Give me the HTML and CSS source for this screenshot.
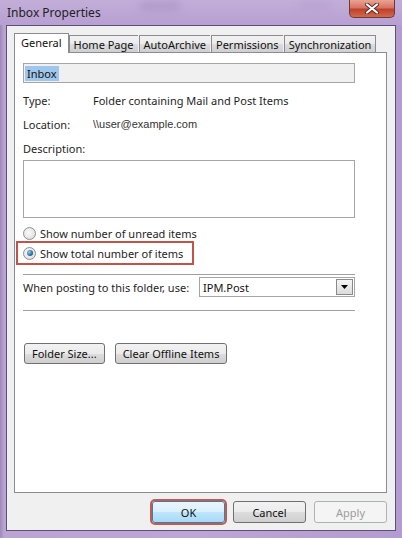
FILE: index.html
```html
<!DOCTYPE html>
<html lang="en">
<head>
<meta charset="UTF-8">
<title>Inbox Properties</title>
<link rel="stylesheet" href="styles.css">
</head>
<body>
<div class="window">
	<div class="titlebar">
		<span class="title">Inbox Properties</span>
		<span class="blur b1"></span>
		<span class="blur b2"></span>
		<div class="close">
			<svg width="16" height="11" viewBox="0 0 16 11">
				<path d="M3 1.5 L13 9.5 M13 1.5 L3 9.5" stroke="#5a2a2a" stroke-width="4" stroke-linecap="round"/>
				<path d="M3 1.5 L13 9.5 M13 1.5 L3 9.5" stroke="#fff" stroke-width="2.2" stroke-linecap="round"/>
			</svg>
		</div>
	</div>
	<div class="client">
		<ul class="tabs">
			<li class="tab active">General</li>
			<li class="tab">Home Page</li>
			<li class="tab">AutoArchive</li>
			<li class="tab">Permissions</li>
			<li class="tab">Synchronization</li>
		</ul>
		<div class="panel">
			<div class="namebox"><span class="sel">Inbox</span></div>
			<div class="row"><span class="label">Type:</span><span>Folder containing Mail and Post Items</span></div>
			<div class="row"><span class="label">Location:</span><span class="loc">\\user@example.com</span></div>
			<div class="row desc">Description:</div>
			<div class="textarea"></div>
			<div class="radios">
				<label class="radio"><span class="dot"></span>Show number of unread items</label>
				<label class="radio checked"><span class="dot"></span>Show total number of items</label>
			</div>
			<div class="sep first"></div>
			<div class="posting">
				<span>When posting to this folder, use:</span>
				<div class="combo">
					<span>IPM.Post</span>
					<span class="drop"><svg width="7" height="4" viewBox="0 0 7 4"><path d="M0 0 H7 L3.5 4 Z" fill="#000"/></svg></span>
				</div>
			</div>
			<div class="sep"></div>
			<div class="actions">
				<button class="btn">Folder Size...</button>
				<button class="btn">Clear Offline Items</button>
			</div>
		</div>
		<div class="footer">
			<button class="btn big ok">OK</button>
			<button class="btn big">Cancel</button>
			<button class="btn big disabled">Apply</button>
		</div>
	</div>
</div>
</body>
</html>
```

FILE: styles.css
```css
body{
	margin: 0;
	font-family: "Noto Sans", "Open Sans", sans-serif;
	font-size: 11px;
	color: #1e1e1e;
}
ul,li{
	margin: 0;
	padding: 0;
	list-style: none;
}
.window{
	width: 402px;
	height: 538px;
	background: linear-gradient(90deg, #9c88b9 0px, #b9a4d4 4px, #bba6d5 50%, #b39ccf 100%);
	position: relative;
	overflow: hidden;
	display: flex;
	flex-direction: column;
}
.titlebar{
	height: 25px;
	display: flex;
	align-items: flex-start;
	justify-content: space-between;
	position: relative;
	background: linear-gradient(180deg, #c3aed9 0%, #b7a0d2 100%);
}
.title{
	margin: 4px 0 0 7px;
	font-size: 12px;
	color: #222;
	position: relative;
	z-index: 2;
}
.blur{
	position: absolute;
	background: #9b88b6;
	filter: blur(4px);
	opacity: .5;
}
.b1{ left: 140px; top: 2px; width: 40px; height: 8px; }
.b2{ left: 300px; top: 2px; width: 30px; height: 6px; opacity: .3; }
.close{
	width: 46px;
	height: 18px;
	margin-right: 7px;
	border: 1px solid #6d3a3a;
	border-top: none;
	border-radius: 0 0 5px 5px;
	background: linear-gradient(180deg, #e9a493 0%, #d77463 45%, #c2402c 55%, #cf6a4d 100%);
	display: flex;
	align-items: center;
	justify-content: center;
	box-sizing: border-box;
	position: relative;
	z-index: 2;
}
.client{
	margin: 0 6px 7px 6px;
	flex: 1;
	background: #f0f0f0;
	border: 1px solid #5e4f74;
	display: flex;
	flex-direction: column;
	padding: 8px 8px 0 7px;
}
.tabs{
	display: flex;
	height: 18px;
	align-items: flex-end;
	position: relative;
	z-index: 2;
	white-space: nowrap;
}
.tab{
	height: 16px;
	padding: 0 4px;
	border: 1px solid #898c95;
	border-bottom: none;
	border-right: none;
	background: linear-gradient(180deg, #f2f2f2 0%, #ebebeb 50%, #dddddd 51%, #cfcfcf 100%);
	line-height: 17px;
	color: #111;
	margin-left: 1px;
}
.tab:last-child{
	border-right: 1px solid #898c95;
}
.tab.active{
	height: 19px;
	background: #fff;
	border-right: 1px solid #898c95;
	margin-left: 0;
	margin-right: -1px;
	padding: 0 6px 0 6px;
	line-height: 18px;
	margin-bottom: -1px;
}
.panel{
	height: 429px;
	background: #fff;
	border: 1px solid #898c95;
	padding: 10px 31px 0 8px;
}
.namebox{
	height: 18px;
	border: 1px solid #a5a5a5;
	background: #f0f0f0;
	padding: 0 1px;
	display: flex;
	align-items: center;
}
.sel{
	background: #9fc6ec;
	padding: 0 2px;
	line-height: 15px;
	color: #111;
}
.row{
	display: flex;
	height: 24px;
	align-items: center;
}
.row:nth-child(2){
	margin-top: 5px;
}
.label{
	width: 70px;
}
.loc{
	position: relative;
	font-family: "Liberation Sans", Arial, sans-serif;
	font-size: 11px;
	color: #333;
}
.loc::after{
	content: "";
	position: absolute;
	left: -4px;
	top: 0;
	width: 180px;
	height: 14px;
	background: linear-gradient(90deg, #e6e6e6 0%, #e2e2e2 80%, rgba(220,220,220,0) 100%);
	filter: blur(2px);
	z-index: -1;
}
.desc{
	height: 24px;
}
.textarea{
	height: 56px;
	border: 1px solid #a5a5a5;
	background: #fff;
}
.radios{
	margin-top: 5px;
	display: flex;
	flex-direction: column;
}
.radio{
	display: flex;
	align-items: center;
	height: 20px;
	position: relative;
}
.radio .dot{
	width: 11px;
	height: 11px;
	border-radius: 50%;
	border: 1px solid #8e8f8f;
	background: radial-gradient(circle at 40% 40%, #fafafa 0%, #d8d8d8 100%);
	margin-right: 4px;
	display: flex;
	align-items: center;
	justify-content: center;
}
.radio.checked .dot::before{
	content: "";
	width: 6px;
	height: 6px;
	border-radius: 50%;
	background: radial-gradient(circle at 35% 35%, #8fd0f4 0%, #1d5b8a 70%, #0c3a63 100%);
}
.radio.checked::after{
	content: "";
	position: absolute;
	left: -7px;
	top: -2px;
	width: 174px;
	height: 20px;
	border: 2px solid #c2534a;
}
.sep{
	height: 1px;
	background: #a0a0a0;
	margin-top: 13px;
}
.sep.first{
	margin-top: 11px;
}
.posting{
	display: flex;
	align-items: center;
	justify-content: space-between;
	height: 20px;
	margin-top: 2px;
}
.combo{
	width: 151px;
	height: 18px;
	border: 1px solid #a5a5a5;
	display: flex;
	align-items: center;
	justify-content: space-between;
	padding-left: 3px;
	color: #111;
}
.drop{
	width: 15px;
	height: 14px;
	margin-right: 1px;
	border: 1px solid #8a8a8a;
	background: linear-gradient(180deg, #f4f4f4 0%, #dcdcdc 100%);
	display: flex;
	align-items: center;
	justify-content: center;
}
.actions{
	margin-top: 32px;
	display: flex;
	gap: 10px;
	padding-left: 1px;
}
.btn{
	font-family: inherit;
	font-size: 11px;
	color: #111;
	height: 21px;
	padding: 0 7px;
	border: 1px solid #707070;
	border-radius: 3px;
	background: linear-gradient(180deg, #f2f2f2 0%, #ebebeb 50%, #dddddd 51%, #cfcfcf 100%);
}
.footer{
	display: flex;
	justify-content: flex-end;
	gap: 8px;
	margin-top: 8px;
}
.btn.big{
	width: 73px;
	height: 22px;
}
.btn.ok{
	border: 1px solid #3c7fb1;
	box-shadow: 0 0 0 2px #c65a4e;
	background: linear-gradient(180deg, #eaf6fd 0%, #d9f0fc 50%, #bee6fd 51%, #a7d9f5 100%);
}
.btn.disabled{
	color: #9c9c9c;
	border-color: #adb2b5;
	background: #f4f4f4;
}
```
